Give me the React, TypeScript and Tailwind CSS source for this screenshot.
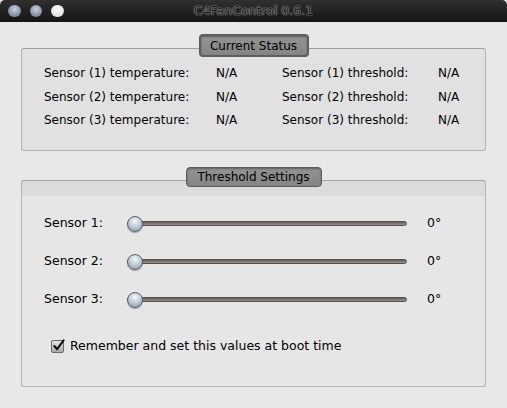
const font = { fontFamily: '"DejaVu Sans", "Liberation Sans", sans-serif' };

export default function App() {
  return (
    <div className="h-[408px] w-[507px] overflow-hidden bg-white text-[12px] text-black" style={font}>
      <div className="flex h-full flex-col bg-[#e8e8e8]">
        <TitleBar />

        <div className="flex flex-col px-[21px] pt-[12px]">
          <GroupBox title="Current Status" tabClass="h-[23px] w-[110px] border-2 border-[#5e5e5e]" overlap="-mt-[9px]">
            <div className="grid grid-cols-[172px_66px_156px_auto] pl-[22px] pt-[13px] pb-[17px] leading-[23.5px]">
              {[1, 2, 3].map((n) => (
                <StatusRow key={n} n={n} />
              ))}
            </div>
          </GroupBox>

          <div className="mt-[16px]">
            <GroupBox
              title="Threshold Settings"
              tabClass="h-[20px] w-[136px] border border-[#5a5a5a]"
              overlap="-mt-[7px]"
              boxClass="bg-[linear-gradient(#dcdcdc_0,#dcdcdc_15px,#e6e6e6_15px)]"
            >
              <div className="flex flex-col pl-[22px] pt-[24px]">
                {[1, 2, 3].map((n) => (
                  <SliderRow key={n} label={`Sensor ${n}:`} />
                ))}
                <label className="mt-[18px] ml-[7px] flex h-[20px] items-center gap-[6px] text-[12.5px]">
                  <Checkbox />
                  Remember and set this values at boot time
                </label>
                <div className="h-[29px]" />
              </div>
            </GroupBox>
          </div>
        </div>
      </div>
    </div>
  );
}

function TitleBar() {
  return (
    <div className="relative flex h-[22px] shrink-0 items-center rounded-t-[5px] bg-[linear-gradient(#303030,#141414)]">
      <div className="flex items-center gap-[9px] pl-[8px]">
        <Light tone="bg-[radial-gradient(circle_at_50%_35%,#c6d2de,#7c8a99_70%,#56616d)]" />
        <Light tone="bg-[radial-gradient(circle_at_50%_35%,#c6d2de,#7c8a99_70%,#56616d)]" />
        <Light tone="bg-[radial-gradient(circle_at_50%_35%,#ffffff,#e4e4e4_60%,#bdbdbd)]" />
      </div>
      <span className="absolute inset-x-0 text-center text-[12.5px] text-[#1a1a1a] [text-shadow:0_0_1px_#b0b0b0,0_0_1px_#a0a0a0,0_0_2px_#666]">
        C4FanControl 0.6.1
      </span>
    </div>
  );
}

function Light({ tone }: { tone: string }) {
  return <div className={`size-[12.5px] rounded-full ${tone}`} />;
}

function GroupBox({
  title,
  tabClass,
  overlap,
  boxClass = "bg-[#e1e1e1]",
  children,
}: {
  title: string;
  tabClass: string;
  overlap: string;
  boxClass?: string;
  children: React.ReactNode;
}) {
  return (
    <div className="flex flex-col items-center">
      <div
        className={`relative z-10 flex items-center justify-center rounded-[4px] bg-[linear-gradient(#939393,#858585)] text-[12px] shadow-[inset_0_1px_2px_rgba(0,0,0,0.35)] ${tabClass}`}
      >
        {title}
      </div>
      <div className={`w-full rounded-[3px] border border-[#b3b3b3] border-t-[#a2a2a2] ${boxClass} ${overlap}`}>
        {children}
      </div>
    </div>
  );
}

function StatusRow({ n }: { n: number }) {
  return (
    <>
      <span>Sensor ({n}) temperature:</span>
      <span>N/A</span>
      <span>Sensor ({n}) threshold:</span>
      <span>N/A</span>
    </>
  );
}

function SliderRow({ label }: { label: string }) {
  return (
    <div className="flex h-[38px] items-center text-[12.5px]">
      <span className="w-[83px]">{label}</span>
      <div className="relative flex w-[280px] items-center">
        <div className="h-[5px] w-full rounded-full border border-[#564f4b] bg-[linear-gradient(#645c58,#9a948f)]" />
        <div className="absolute left-0 size-[16px] rounded-full border border-[#58626d] bg-[radial-gradient(circle_at_50%_30%,#f4f7fa,#b9c4cf_55%,#7f8d9b)] shadow-[0_1px_1px_rgba(0,0,0,0.3)]" />
      </div>
      <span className="ml-[20px]">0°</span>
    </div>
  );
}

function Checkbox() {
  return (
    <span className="flex size-[13px] items-center justify-center rounded-[2px] border border-[#6b6b6b] bg-[linear-gradient(#e6e6e6,#a9a9a9)]">
      <svg viewBox="0 0 14 14" className="size-[13px] -mt-[2px] ml-[1px] overflow-visible">
        <path d="M2.5 7.5 L5.5 11 L12.5 1.5" fill="none" stroke="#111" strokeWidth="2.2" strokeLinecap="round" strokeLinejoin="round" />
      </svg>
    </span>
  );
}
